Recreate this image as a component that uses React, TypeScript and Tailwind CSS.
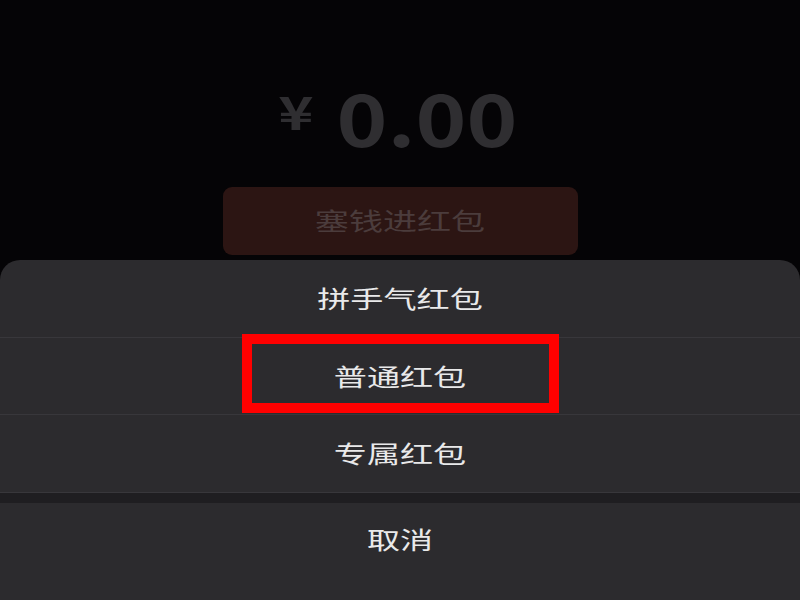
// 红包发送页：底部弹出的类型选择面板（普通红包被红框标出）

const cjk = { fontFamily: '"Noto Sans CJK SC", "Noto Sans", sans-serif' };

const options = ["拼手气红包", "普通红包", "专属红包"];

function Wide({ children }: { children: React.ReactNode }) {
  // 原图横向被拉宽，文字也一起拉宽
  return <span className="inline-block scale-x-[1.38]">{children}</span>;
}

export default function App() {
  return (
    <div className="flex h-[600px] w-[800px] flex-col overflow-hidden bg-[#050406]" style={cjk}>
      {/* 金额 + 按钮（被遮罩压暗） */}
      <div className="flex h-[260px] flex-col items-center pt-[79px]">
        <div className="flex h-[80px] items-center gap-[21px] pr-[7px] font-bold text-[#2f2e31]">
          <span className="mt-[-18px] inline-block w-[40px] scale-x-[1.3] text-center text-[46px] leading-none">
            ¥
          </span>
          <span className="mt-[-6px] inline-block w-[180px] scale-x-[1.2] text-center text-[72px] leading-none">
            0.00
          </span>
        </div>
        <div className="mt-[28px] flex h-[68px] w-[355px] items-center justify-center rounded-[9px] bg-[#2c1513] pb-[3px] text-[24px] text-[#4b3c3c]">
          <span className="inline-block scale-x-[1.42]">塞钱进红包</span>
        </div>
      </div>

      {/* 底部操作面板 */}
      <div className="relative flex-1 rounded-t-[20px] bg-[#2c2b2e] text-[24px] text-[#e9e9ea]">
        {options.map((o) => (
          <div
            key={o}
            className="flex h-[77.5px] items-center justify-center border-b border-[#38373b] last:border-b-0"
          >
            <Wide>{o}</Wide>
          </div>
        ))}
        <div className="h-[10px] bg-[#1f1e21]" />
        <div className="flex h-[96px] items-center justify-center pb-[24px]">
          <Wide>取消</Wide>
        </div>

        {/* 标注红框 */}
        <div className="absolute left-[242px] top-[74px] h-[79px] w-[317px] border-[10px] border-[#ff0000]" />
      </div>
    </div>
  );
}
